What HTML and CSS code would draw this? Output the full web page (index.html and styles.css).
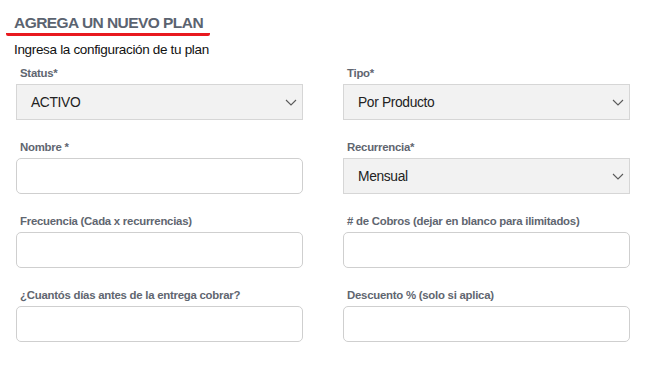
FILE: index.html
```html
<!DOCTYPE html>
<html lang="es">
<head>
<meta charset="utf-8">
<link rel="stylesheet" href="styles.css">
</head>
<body>
<div class="page">
  <div class="heading">
    <h2 class="title">AGREGA UN NUEVO PLAN</h2>
  </div>
  <p class="subtitle">Ingresa la configuración de tu plan</p>
  <div class="form-grid">
    <div class="field">
      <label class="label">Status*</label>
      <div class="select"><span>ACTIVO</span>
        <svg class="chev" width="12" height="7" viewBox="0 0 12 7"><path d="M1 1l5 5 5-5" fill="none" stroke="#5a5a5a" stroke-width="1.1"/></svg>
      </div>
    </div>
    <div class="field">
      <label class="label">Tipo*</label>
      <div class="select"><span>Por Producto</span>
        <svg class="chev" width="12" height="7" viewBox="0 0 12 7"><path d="M1 1l5 5 5-5" fill="none" stroke="#5a5a5a" stroke-width="1.1"/></svg>
      </div>
    </div>
    <div class="field">
      <label class="label">Nombre *</label>
      <div class="input"></div>
    </div>
    <div class="field">
      <label class="label">Recurrencia*</label>
      <div class="select"><span>Mensual</span>
        <svg class="chev" width="12" height="7" viewBox="0 0 12 7"><path d="M1 1l5 5 5-5" fill="none" stroke="#5a5a5a" stroke-width="1.1"/></svg>
      </div>
    </div>
    <div class="field">
      <label class="label">Frecuencia (Cada x recurrencias)</label>
      <div class="input"></div>
    </div>
    <div class="field">
      <label class="label"># de Cobros (dejar en blanco para ilimitados)</label>
      <div class="input"></div>
    </div>
    <div class="field">
      <label class="label">¿Cuantós días antes de la entrega cobrar?</label>
      <div class="input"></div>
    </div>
    <div class="field">
      <label class="label">Descuento % (solo si aplica)</label>
      <div class="input"></div>
    </div>
  </div>
</div>
</body>
</html>
```
FILE: styles.css
```css
* { box-sizing: border-box; }
html, body { margin: 0; background: #fff; }
body { font-family: "Liberation Sans", Arial, sans-serif; }
.page { padding: 13px 0 0 0; }
.heading { display: flex; padding-left: 6px; }
.title {
  margin: 0;
  padding: 0 7px 1px 8px;
  font-size: 15.5px;
  letter-spacing: -0.55px;
  line-height: 19px;
  font-weight: bold;
  color: #5b6370;
  border-bottom: 3px solid #e8191f;
  border-radius: 2px;
}
.subtitle {
  margin: 6px 0 0 14px;
  font-size: 13.5px;
  letter-spacing: -0.33px;
  line-height: 16px;
  color: #111;
}
.form-grid {
  display: grid;
  grid-template-columns: 287px 287px;
  column-gap: 40px;
  row-gap: 20px;
  padding-left: 16px;
  margin-top: 8px;
}
.field { display: flex; flex-direction: column; }
.label {
  font-size: 11.4px;
  letter-spacing: -0.25px;
  line-height: 14px;
  font-weight: bold;
  color: #5f6670;
  padding-left: 4px;
  margin-bottom: 4px;
}
.select {
  height: 36px;
  background: #f2f2f2;
  border: 1px solid #d6d6d6;
  display: flex;
  align-items: center;
  justify-content: space-between;
  padding: 0 5px 0 14px;
  font-size: 13.8px;
  letter-spacing: -0.35px;
  color: #222;
}
.chev { display: block; }
.input {
  height: 36px;
  border: 1px solid #cfcfcf;
  border-radius: 5px;
  background: #fff;
}
```
